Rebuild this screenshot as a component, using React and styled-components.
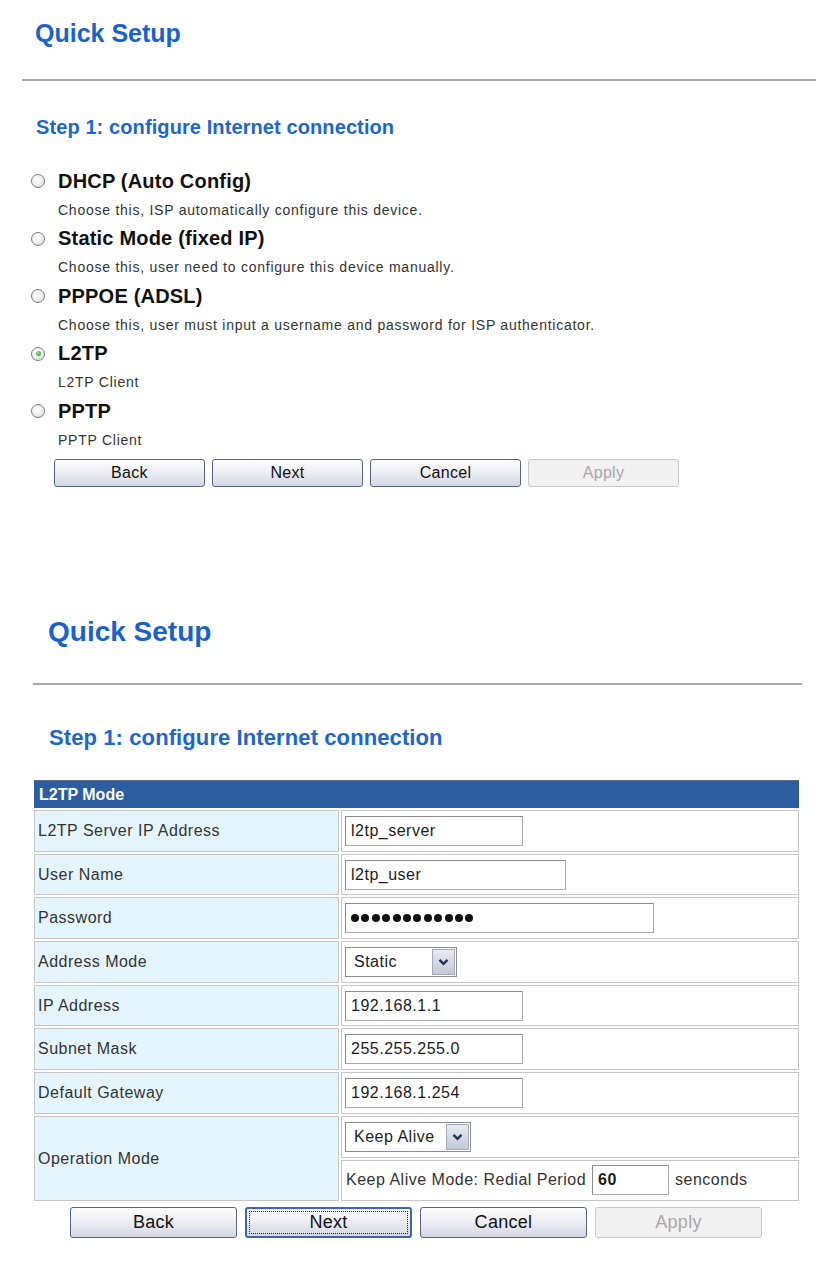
import React from 'react';
import styled, { createGlobalStyle, css } from 'styled-components';

const GlobalStyle = createGlobalStyle`
  html, body {
    margin: 0;
    padding: 0;
    background: #fff;
  }
  body {
    font-family: "Liberation Sans", Arial, Helvetica, sans-serif;
    color: #222;
  }
`;

const Page = styled.div`
  width: 840px;
  display: flex;
  flex-direction: column;
`;

const Section = styled.section`
  display: flex;
  flex-direction: column;
  padding-top: ${p => p.$top}px;
`;

const Title = styled.h1`
  margin: 0 0 0 ${p => p.$x}px;
  font-size: ${p => p.$size}px;
  line-height: ${p => p.$lh}px;
  font-weight: bold;
  color: #1a62c8;
`;

const Rule = styled.hr`
  margin: ${p => p.$gap}px ${p => p.$r}px 0 ${p => p.$l}px;
  height: 2px;
  border: 0;
  background: #a9a9a9;
`;

const Step = styled.h2`
  margin: ${p => p.$gap}px 0 0 ${p => p.$x}px;
  font-size: ${p => p.$size}px;
  line-height: ${p => p.$lh}px;
  font-weight: bold;
  letter-spacing: 0.1px;
  color: #1d66cc;
`;

/* ---- connection type list ---- */

const Options = styled.div`
  margin-top: 28px;
  display: flex;
  flex-direction: column;
`;

const OptionHead = styled.label`
  display: flex;
  align-items: center;
  gap: 13px;
  padding-left: 31px;
  height: 28.5px;
  font-size: 20px;
  font-weight: bold;
  letter-spacing: 0.2px;
  color: #111;
`;

const Radio = styled.span`
  position: relative;
  flex: none;
  box-sizing: border-box;
  width: 14px;
  height: 14px;
  border-radius: 50%;
  border: 1px solid #7c7c7c;
  background: radial-gradient(circle at 40% 35%, #fff 0%, #f1f1f1 45%, #d2d2d2 100%);
  ${p => p.$checked && css`
    &::after {
      content: '';
      position: absolute;
      left: 3.5px;
      top: 3.5px;
      width: 5px;
      height: 5px;
      border-radius: 50%;
      background: radial-gradient(circle at 40% 35%, #9be59b, #1e8a2b);
    }
  `}
`;

const OptionDesc = styled.div`
  padding-left: 58px;
  height: 29px;
  line-height: 29px;
  font-size: 14px;
  letter-spacing: 0.75px;
  color: #333;
`;

/* ---- buttons ---- */

const ButtonRow = styled.div`
  display: flex;
  gap: ${p => p.$space}px;
  margin-top: ${p => p.$gap}px;
  padding-left: ${p => p.$x}px;
`;

const Button = styled.button`
  box-sizing: border-box;
  width: ${p => p.$w}px;
  height: ${p => p.$h}px;
  padding: 0;
  border: 1px solid #56657f;
  border-radius: 3px;
  background: linear-gradient(#fdfdfd 0%, #eeeff4 45%, #d3d6e4 100%);
  font-family: inherit;
  font-size: ${p => p.$size}px;
  letter-spacing: 0.3px;
  color: #111;
  ${p => p.$focused && css`
    border: 2px solid #3f67a8;
    outline: 1px dotted #222;
    outline-offset: -5px;
  `}
  &:disabled {
    border-color: #c9c9c9;
    background: #f1f1f1;
    color: #a8a8a8;
  }
`;

/* ---- L2TP form ---- */

const Form = styled.div`
  margin: 29px 0 0 34px;
  width: 765px;
  display: grid;
  grid-template-columns: 305px 458px;
  grid-template-rows: 28px;
  grid-auto-rows: 41.7px;
  gap: 2px;
  font-size: 16px;
  letter-spacing: 0.5px;
`;

const FormHeader = styled.div`
  grid-column: 1 / -1;
  display: flex;
  align-items: center;
  padding-left: 5px;
  border-top: 1px solid #55698a;
  background: #2c5da0;
  color: #fff;
  font-size: 16px;
  font-weight: bold;
  letter-spacing: 0;
`;

const Cell = styled.div`
  box-sizing: border-box;
  display: flex;
  align-items: center;
  border: 1px solid #c6c6c6;
  ${p => p.$rows && css`grid-row: span ${p.$rows};`}
`;

const LabelCell = styled(Cell)`
  padding-left: 3px;
  background: #e5f5fd;
  color: #333;
`;

const ValueCell = styled(Cell)`
  gap: ${p => p.$gap || 0}px;
  padding-left: ${p => p.$pad ?? 3}px;
  background: #fff;
  color: #333;
`;

const Field = styled.div`
  box-sizing: border-box;
  display: flex;
  align-items: center;
  gap: 2.4px;
  width: ${p => p.$w}px;
  height: 30px;
  padding: 0 5px;
  border: 1px solid #a9a9a9;
  border-top-color: #8c8c8c;
  border-left-color: #8c8c8c;
  background: #fff;
  color: #1c1c1c;
  font-weight: ${p => (p.$bold ? 'bold' : 'normal')};
`;

const Dot = styled.span`
  width: 8px;
  height: 8px;
  border-radius: 50%;
  background: #111;
`;

const Select = styled.div`
  box-sizing: border-box;
  display: flex;
  align-items: center;
  justify-content: space-between;
  width: ${p => p.$w}px;
  height: 30px;
  padding: 0 1px 0 8px;
  border: 1px solid #8d8d8d;
  background: #fff;
  color: #1c1c1c;
`;

const SelectArrow = styled.span`
  box-sizing: border-box;
  display: flex;
  align-items: center;
  justify-content: center;
  width: 23px;
  height: 26px;
  border: 1px solid #a3abbd;
  background: linear-gradient(#e8ebf2, #c2c8d6);
  color: #263150;
`;

const Chevron = () => (
  <svg width="11" height="8" viewBox="0 0 11 8">
    <polyline points="1.5,1.8 5.5,5.8 9.5,1.8" fill="none" stroke="currentColor" strokeWidth="2.4" />
  </svg>
);

const MODES = [
  { name: 'DHCP (Auto Config)', desc: 'Choose this, ISP automatically configure this device.' },
  { name: 'Static Mode (fixed IP)', desc: 'Choose this, user need to configure this device manually.' },
  { name: 'PPPOE (ADSL)', desc: 'Choose this, user must input a username and password for ISP authenticator.' },
  { name: 'L2TP', desc: 'L2TP Client', checked: true },
  { name: 'PPTP', desc: 'PPTP Client' },
];

const ROWS = [
  { label: 'L2TP Server IP Address', value: 'l2tp_server', w: 178 },
  { label: 'User Name', value: 'l2tp_user', w: 221 },
  { label: 'Password', dots: 12, w: 309 },
  { label: 'Address Mode', select: 'Static', w: 112 },
  { label: 'IP Address', value: '192.168.1.1', w: 178 },
  { label: 'Subnet Mask', value: '255.255.255.0', w: 178 },
  { label: 'Default Gateway', value: '192.168.1.254', w: 178 },
];

const BUTTONS = ['Back', 'Next', 'Cancel', 'Apply'];

const renderValue = row => {
  if (row.select) {
    return (
      <Select $w={row.w}>
        {row.select}
        <SelectArrow><Chevron /></SelectArrow>
      </Select>
    );
  }
  if (row.dots) {
    return (
      <Field $w={row.w} aria-label="password">
        {Array.from({ length: row.dots }, (_, i) => <Dot key={i} />)}
      </Field>
    );
  }
  return <Field $w={row.w}>{row.value}</Field>;
};

export default function App() {
  return (
    <>
      <GlobalStyle />
      <Page>
        <Section $top={18}>
          <Title $size={25} $lh={30} $x={35}>Quick Setup</Title>
          <Rule $gap={31} $l={22} $r={24} />
          <Step $size={20} $lh={24} $x={36} $gap={34}>Step 1: configure Internet connection</Step>
          <Options>
            {MODES.map(m => (
              <div key={m.name}>
                <OptionHead>
                  <Radio $checked={m.checked} />
                  {m.name}
                </OptionHead>
                <OptionDesc>{m.desc}</OptionDesc>
              </div>
            ))}
          </Options>
          <ButtonRow $gap={4.5} $x={54} $space={7}>
            {BUTTONS.map(b => (
              <Button key={b} $w={151} $h={28} $size={16} disabled={b === 'Apply'}>{b}</Button>
            ))}
          </ButtonRow>
        </Section>

        <Section $top={129}>
          <Title $size={28} $lh={32} $x={48}>Quick Setup</Title>
          <Rule $gap={35} $l={33} $r={38} />
          <Step $size={22} $lh={26} $x={49} $gap={40}>Step 1: configure Internet connection</Step>
          <Form>
            <FormHeader>L2TP Mode</FormHeader>
            {ROWS.map(r => (
              <React.Fragment key={r.label}>
                <LabelCell>{r.label}</LabelCell>
                <ValueCell>{renderValue(r)}</ValueCell>
              </React.Fragment>
            ))}
            <LabelCell $rows={2}>Operation Mode</LabelCell>
            <ValueCell>
              <Select $w={126}>
                Keep Alive
                <SelectArrow><Chevron /></SelectArrow>
              </Select>
            </ValueCell>
            <ValueCell $pad={4} $gap={6}>
              Keep Alive Mode: Redial Period
              <Field $w={77} $bold>60</Field>
              senconds
            </ValueCell>
          </Form>
          <ButtonRow $gap={6} $x={70} $space={8}>
            {BUTTONS.map(b => (
              <Button
                key={b}
                $w={167}
                $h={31}
                $size={18}
                $focused={b === 'Next'}
                disabled={b === 'Apply'}
              >
                {b}
              </Button>
            ))}
          </ButtonRow>
        </Section>
      </Page>
    </>
  );
}
